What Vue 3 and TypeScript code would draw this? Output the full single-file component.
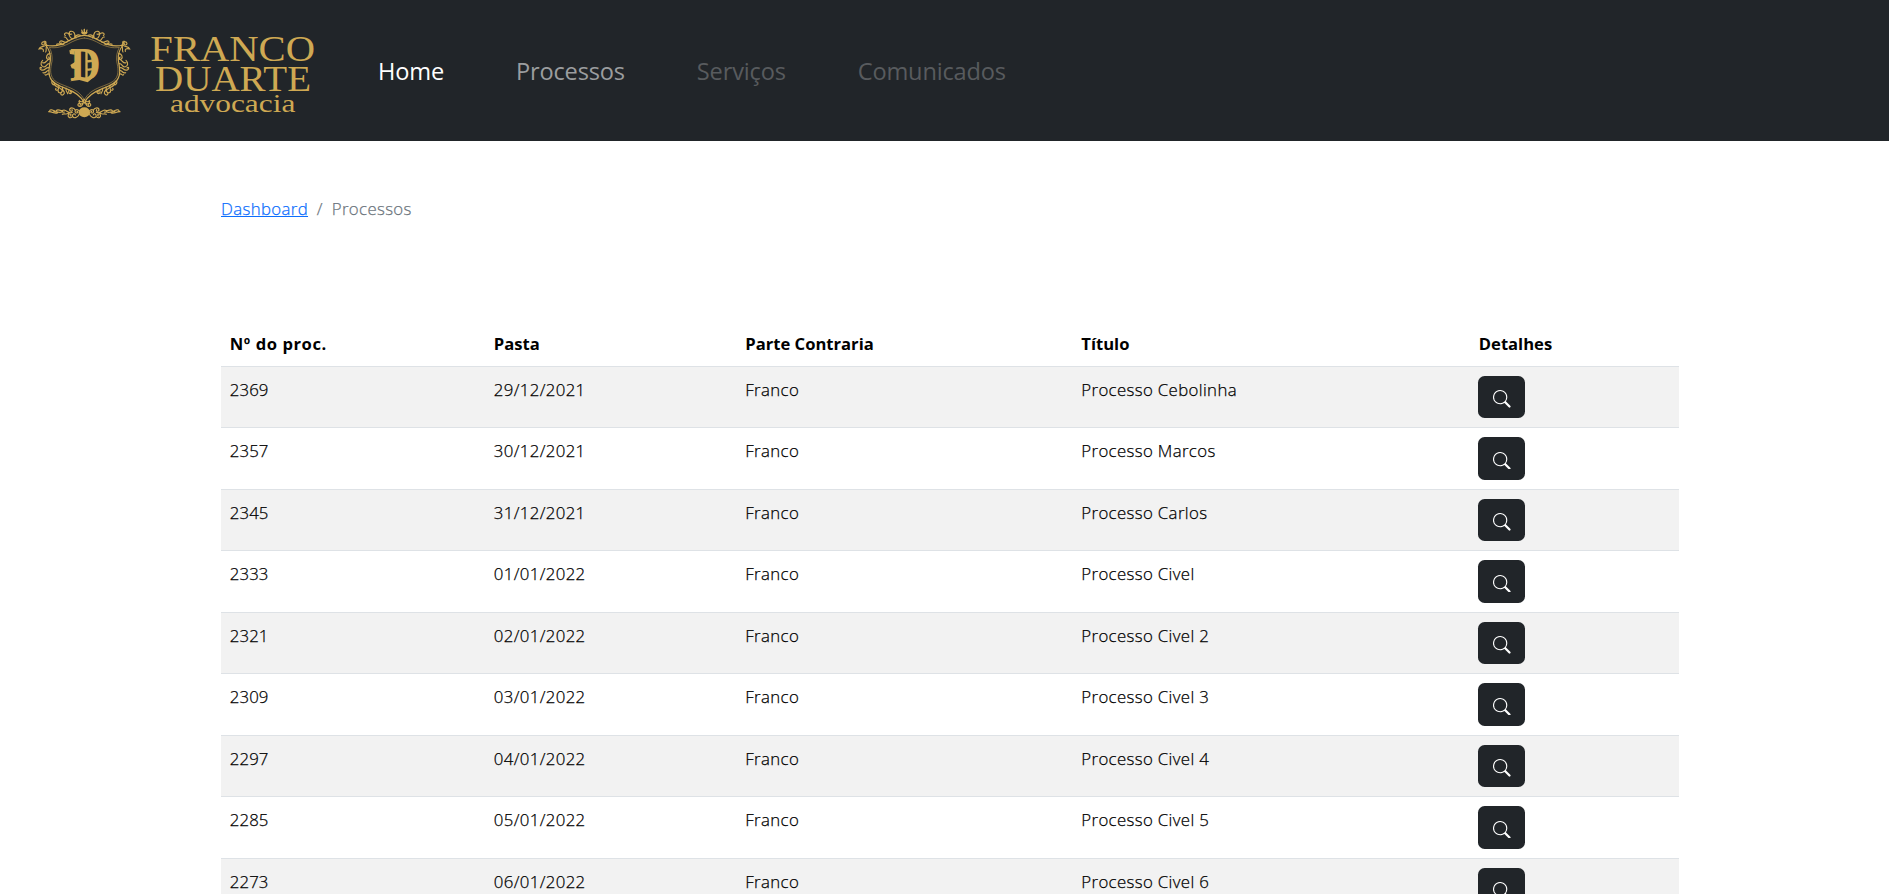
<script setup lang="ts">
interface NavItem {
  label: string
  state: 'active' | 'idle' | 'disabled'
}

interface Processo {
  numero: number
  pasta: string
  parte: string
  titulo: string
}

const navItems: NavItem[] = [
  { label: 'Home', state: 'active' },
  { label: 'Processos', state: 'idle' },
  { label: 'Serviços', state: 'disabled' },
  { label: 'Comunicados', state: 'disabled' },
]

const columns: string[] = ['Nº do proc.', 'Pasta', 'Parte Contraria', 'Título', 'Detalhes']

const processos: Processo[] = [
  { numero: 2369, pasta: '29/12/2021', parte: 'Franco', titulo: 'Processo Cebolinha' },
  { numero: 2357, pasta: '30/12/2021', parte: 'Franco', titulo: 'Processo Marcos' },
  { numero: 2345, pasta: '31/12/2021', parte: 'Franco', titulo: 'Processo Carlos' },
  { numero: 2333, pasta: '01/01/2022', parte: 'Franco', titulo: 'Processo Civel' },
  { numero: 2321, pasta: '02/01/2022', parte: 'Franco', titulo: 'Processo Civel 2' },
  { numero: 2309, pasta: '03/01/2022', parte: 'Franco', titulo: 'Processo Civel 3' },
  { numero: 2297, pasta: '04/01/2022', parte: 'Franco', titulo: 'Processo Civel 4' },
  { numero: 2285, pasta: '05/01/2022', parte: 'Franco', titulo: 'Processo Civel 5' },
  { numero: 2273, pasta: '06/01/2022', parte: 'Franco', titulo: 'Processo Civel 6' },
]

// The crest is symmetric: the left half is drawn once and mirrored around x = 193.
const halves: string[] = ['', 'translate(386 0) scale(-1 1)']
</script>

<template>
  <div class="page">
    <header class="navbar">
      <svg class="logo" viewBox="0 0 960 390" role="img" aria-label="Franco Duarte advocacia">
        <g v-for="(t, i) in halves" :key="i" :transform="t" class="crest">
          <path class="frame" d="M193 76C172 78 161 84 145 93C124 106 100 111 77 105C88 119 93 133 91 151C87 176 84 190 91 204C97 220 117 228 139 236C165 246 184 258 193 279" />
          <path class="thin" d="M193 84C174 86 160 93 146 101C128 110 106 116 88 112C96 127 97 140 96 154C91 176 90 190 97 203C105 217 122 222 142 230C168 240 184 251 193 270" />
          <path class="scroll" d="M193 71C188 73 183 69 186 65M193 58V68M185 60L188 68H193" />
          <path class="scroll" d="M181 76C171 72 164 79 168 84M164 82C167 70 160 62 152 64C144 67 149 76 155 72M157 86C146 84 151 74 144 70C136 66 130 72 136 77M148 92C139 92 142 80 133 81M141 96C132 101 127 88 120 94C117 98 121 102 125 99M132 102C122 108 117 98 110 103" />
          <path class="scroll" d="M80 106C78 94 67 93 65 100C65 107 74 106 73 101M77 106C69 112 60 108 57 117C67 114 72 117 70 124M80 108C76 116 81 121 77 126M76 101C80 97 78 93 73 94" />
          <path class="scroll" d="M90 131C80 131 77 142 82 147C88 150 90 142 85 141M90 147C77 150 78 162 68 158M88 161C78 161 81 171 71 171C61 169 61 157 68 151M86 173C78 170 75 184 64 180C57 176 60 169 65 174M86 182C81 179 78 192 69 188M88 193C80 188 80 199 75 194" />
          <path class="scroll" d="M98 213C92 215 97 226 105 225M103 219C101 231 115 227 116 236C113 245 103 239 108 235M116 226C114 237 126 233 127 243C123 253 112 247 115 242M128 231C123 242 134 240 133 250C129 259 120 255 123 249M139 235C134 245 143 245 143 251M147 240C143 250 150 254 155 248C157 244 151 242 151 246" />
          <path class="scroll" d="M192 268C190 278 181 276 178 272C174 276 182 286 188 280M190 277C186 294 172 291 174 283C178 277 184 283 180 286" />
          <path class="scroll" d="M178 303C171 295 163 300 166 307C171 312 177 305 171 304M178 311C176 321 163 327 158 320C155 312 165 309 166 315M167 301C160 291 149 292 149 300C151 307 160 303 156 299M157 320C149 328 140 318 147 312C154 311 155 317 150 318M157 307C145 313 142 301 132 300C123 300 127 309 133 306M145 310C137 315 134 309 127 313M128 302C118 302 113 296 109 302M125 306C116 310 113 303 101 305M113 308C105 313 101 306 86 305M105 303C98 300 91 297 89 302" />
        </g>
        <ellipse class="fill" cx="193" cy="307" rx="17" ry="15" />
        <text class="initial" x="150" y="210" textLength="92" lengthAdjust="spacingAndGlyphs">D</text>
        <!-- Spurs and cross strokes around the initial -->
        <path class="fill" d="M148 121L164 120V134L150 132ZM151 165L168 154V178L155 175ZM151 214L170 196L203 207L222 201L203 217L178 210Z" />
        <path class="fill" d="M196 126H203V204H196ZM200 151L224 148V155L200 158ZM200 176L224 173V180L200 183Z" />
        <text class="brand" x="391" y="154" font-size="105" textLength="494" lengthAdjust="spacingAndGlyphs">FRANCO</text>
        <text class="brand" x="405" y="244" font-size="105" textLength="468" lengthAdjust="spacingAndGlyphs">DUARTE</text>
        <text class="brand" x="450" y="305" font-size="78" textLength="376" lengthAdjust="spacingAndGlyphs">advocacia</text>
      </svg>
      <nav class="menu">
        <a v-for="item in navItems" :key="item.label" class="link" :class="item.state">{{ item.label }}</a>
      </nav>
    </header>

    <main class="content">
      <ol class="breadcrumb">
        <li><a class="crumb-link" href="#">Dashboard</a></li>
        <li class="slash">/</li>
        <li>Processos</li>
      </ol>

      <table class="table">
        <thead>
          <tr class="row head">
            <th v-for="c in columns" :key="c">{{ c }}</th>
          </tr>
        </thead>
        <tbody>
          <tr v-for="p in processos" :key="p.numero" class="row">
            <td class="numero">{{ p.numero }}</td>
            <td>{{ p.pasta }}</td>
            <td>{{ p.parte }}</td>
            <td>{{ p.titulo }}</td>
            <td class="action">
              <button class="details" type="button" aria-label="Detalhes">
                <svg class="search" viewBox="0 0 16 16">
                  <path d="M11.742 10.344a6.5 6.5 0 1 0-1.397 1.398h-.001c.03.04.062.078.098.115l3.85 3.85a1 1 0 0 0 1.415-1.414l-3.85-3.85a1.007 1.007 0 0 0-.115-.1zM12 6.5a5.5 5.5 0 1 1-11 0 5.5 5.5 0 0 1 11 0z" />
                </svg>
              </button>
            </td>
          </tr>
        </tbody>
      </table>
    </main>
  </div>
</template>

<style>
html,
body {
  margin: 0;
  background: #fff;
}
</style>

<style scoped>
.page {
  height: 894px;
  overflow: hidden;
  background: #fff;
  color: #000;
  font-family: 'Open Sans', 'Noto Sans', sans-serif;
  font-size: 16.8px;
  font-weight: 350;
  line-height: 26.4px;
  letter-spacing: 0.37px;
}

.navbar {
  display: flex;
  align-items: flex-start;
  box-sizing: border-box;
  height: 141px;
  padding: 10px 0 0 20px;
  background: #212529;
}

.logo {
  flex: none;
  width: 320px;
  height: 130px;
  letter-spacing: 0;
}

.crest path {
  fill: none;
  stroke: #cfa953;
  stroke-linecap: round;
}

.crest .frame {
  stroke-width: 3.6;
}

.crest .thin {
  stroke-width: 1.6;
}

.crest .scroll {
  stroke-width: 3.4;
}

.fill {
  fill: #cfa953;
}

.initial {
  fill: #cfa953;
  font-family: 'Liberation Serif', serif;
  font-size: 137px;
  font-weight: 700;
}

.brand {
  fill: #cfa953;
  font-family: 'Liberation Serif', serif;
  font-weight: 400;
}

.menu {
  display: flex;
  gap: 72px;
  padding: 43px 0 0 38px;
}

.link {
  font-size: 23.6px;
  font-weight: 400;
  line-height: 36px;
  letter-spacing: -0.18px;
}

.link.active {
  color: #fff;
}

.link.idle {
  color: #9b9d9f;
}

.link.disabled {
  color: #585b5e;
}

.content {
  width: 1458px;
  margin-left: 221px;
}

.breadcrumb {
  display: flex;
  margin: 0;
  padding: 54.9px 0 0;
  list-style: none;
  color: #6c757d;
  -webkit-text-stroke: 0.25px currentColor;
}

.crumb-link {
  color: #0d6efd;
  text-decoration: underline;
}

.slash {
  padding: 0 8.8px;
}

.table {
  display: block;
  margin-top: 99.3px;
}

.table thead,
.table tbody {
  display: block;
}

.row {
  display: grid;
  grid-template-columns: 264px 251.5px 336px 397.5px 209px;
  box-sizing: border-box;
  height: 61.5px;
  border-bottom: 1px solid #dee2e6;
}

.row.head {
  height: 45.3px;
}

tbody .row:nth-child(odd) {
  background: #f2f2f2;
}

th,
td {
  padding: 9.7px 8.8px 0;
  text-align: left;
}

td {
  -webkit-text-stroke: 0.25px currentColor;
}

.numero {
  letter-spacing: 0.1px;
}

th {
  font-size: 16.6px;
  font-weight: 700;
  letter-spacing: 0;
}

th:first-child {
  letter-spacing: 0.55px;
}

.action {
  padding-top: 8.8px;
}

.details {
  display: flex;
  align-items: center;
  justify-content: center;
  width: 47px;
  height: 42.6px;
  margin: 0 0 0 -0.6px;
  padding: 4px 0 0;
  border: 0;
  border-radius: 6.6px;
  background: #212529;
}

.search {
  width: 17.6px;
  height: 17.6px;
  fill: #fff;
}
</style>
